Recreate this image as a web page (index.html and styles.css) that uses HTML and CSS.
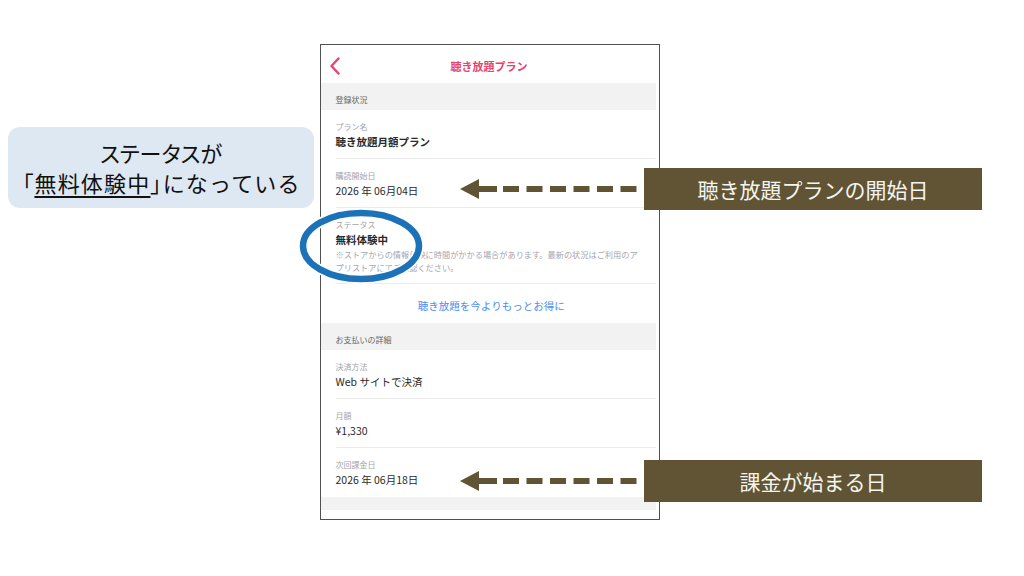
FILE: index.html
```html
<!DOCTYPE html>
<html lang="ja">
<head>
<meta charset="utf-8">
<title>聴き放題プラン</title>
<link rel="stylesheet" href="styles.css">
</head>
<body>
<div class="slide">
  <div class="phone">
    <div class="screen">
      <header class="nav">
        <svg class="back" width="12" height="18" viewBox="0 0 12 18"><polyline points="9.5,1.5 2.5,9 9.5,16.5" fill="none" stroke="#e6446e" stroke-width="2.4" stroke-linecap="round" stroke-linejoin="round"/></svg>
        <h1 class="title">聴き放題プラン</h1>
        <span></span>
      </header>
      <div class="band">登録状況</div>
      <div class="row">
        <div class="label">プラン名</div>
        <div class="value strong">聴き放題月額プラン</div>
      </div>
      <div class="row">
        <div class="label">購読開始日</div>
        <div class="value">2026 年 06月04日</div>
      </div>
      <div class="row last status">
        <div class="label">ステータス</div>
        <div class="value strong">無料体験中</div>
        <p class="note">※ストアからの情報反映に時間がかかる場合があります。最新の状況はご利用のアプリストアにてご確認ください。</p>
      </div>
      <div class="link-row"><span class="link">聴き放題を今よりもっとお得に</span></div>
      <div class="band">お支払いの詳細</div>
      <div class="row">
        <div class="label">決済方法</div>
        <div class="value">Web サイトで決済</div>
      </div>
      <div class="row">
        <div class="label">月額</div>
        <div class="value">¥1,330</div>
      </div>
      <div class="row last">
        <div class="label">次回課金日</div>
        <div class="value">2026 年 06月18日</div>
      </div>
      <div class="band short"></div>
    </div>
  </div>

  <div class="callout">
    <div class="line1">ステータスが</div>
    <div class="line2"><span class="br">「</span><span class="ul">無料体験中</span><span class="br">」</span>になっている</div>
  </div>

  <svg class="ring" width="140" height="90" viewBox="0 0 140 90">
    <ellipse cx="70" cy="44" rx="58" ry="33" fill="none" stroke="#ffffff" stroke-width="10"/>
    <ellipse cx="70" cy="44" rx="58" ry="33" fill="none" stroke="#1c72b8" stroke-width="6.5"/>
  </svg>

  <div class="pointer p1">
    <svg class="arrow" width="184" height="22" viewBox="0 0 184 22">
      <polygon points="0,11 19,1 19,21" fill="#605434"/>
      <rect x="18" y="8" width="19" height="6" fill="#605434"/>
      <line x1="43" y1="11" x2="184" y2="11" stroke="#605434" stroke-width="6" stroke-dasharray="16 7.5"/>
    </svg>
    <div class="tag">聴き放題プランの開始日</div>
  </div>

  <div class="pointer p2">
    <svg class="arrow" width="184" height="22" viewBox="0 0 184 22">
      <polygon points="0,11 19,1 19,21" fill="#605434"/>
      <rect x="18" y="8" width="19" height="6" fill="#605434"/>
      <line x1="43" y1="11" x2="184" y2="11" stroke="#605434" stroke-width="6" stroke-dasharray="16 7.5"/>
    </svg>
    <div class="tag">課金が始まる日</div>
  </div>
</div>
</body>
</html>
```

FILE: styles.css
```css
* { box-sizing: border-box; }
html, body { margin: 0; padding: 0; background: #ffffff; }
body {
  font-family: "Noto Sans CJK JP", "Noto Sans", sans-serif;
  width: 1024px;
  height: 576px;
  overflow: hidden;
}
.slide {
  position: relative;
  width: 1024px;
  height: 576px;
  padding: 44px 0 0 320px;
}
.phone {
  width: 340px;
  border: 1.5px solid #505050;
  background: #ffffff;
}
.screen {
  padding: 0 3.5px 9px 0;
}
.nav {
  height: 38px;
  display: grid;
  grid-template-columns: 40px 1fr 40px;
  align-items: center;
  padding: 4px 0 0 7.5px;
}
.back { display: block; }
.title {
  margin: 0 -40px;
  text-align: center;
  font-size: 11px;
  font-weight: 700;
  color: #e6446e;
  line-height: 16px;
  grid-column: 2;
  padding-right: 6px;
}
.nav span { grid-column: 3; }
.band {
  background: #f2f2f2;
  height: 27px;
  padding: 11px 0 0 14.5px;
  font-size: 8px;
  line-height: 12px;
  color: #666666;
}
.band.short { height: 13px; padding: 0; }
.row {
  margin-left: 14.5px;
  padding: 11px 0 8px 0;
  border-bottom: 1px solid #ececec;
  height: 49px;
}
.row.last { border-bottom: none; }
.row.status { height: 75.5px; border-bottom: 1px solid #ececec; }
.label {
  font-size: 8px;
  line-height: 12px;
  color: #a3a3ab;
}
.value {
  font-size: 10.5px;
  line-height: 18px;
  color: #2a2a2a;
}
.value.strong { font-weight: 700; }
.note {
  margin: -1px 0 0 0;
  width: 309px;
  font-size: 8.2px;
  line-height: 13px;
  color: #a6a6ae;
}
.link-row {
  height: 39px;
  line-height: 39px;
  text-align: center;
  padding-left: 6px;
}
.link {
  font-size: 10.5px;
  color: #4a8ef0;
}
.callout {
  position: absolute;
  left: 8px;
  top: 127px;
  width: 306px;
  height: 81px;
  border-radius: 12px;
  background: #dee8f3;
  display: flex;
  flex-direction: column;
  align-items: center;
  justify-content: center;
  font-size: 22px;
  line-height: 30px;
  color: #111111;
  padding-bottom: 2px;
}
.line1 { font-feature-settings: "palt"; }
.line2 { letter-spacing: 1.2px; padding-left: 1px; }
.br { font-feature-settings: "palt"; }
.ul {
  text-decoration: underline;
  text-decoration-thickness: 1.5px;
  text-underline-offset: 4px;
}
.ring {
  position: absolute;
  left: 291px;
  top: 202px;
}
.pointer {
  position: absolute;
  left: 460px;
  display: flex;
  align-items: center;
}
.pointer.p1 { top: 168px; }
.pointer.p2 { top: 460px; }
.arrow { display: block; }
.tag {
  width: 338px;
  height: 42px;
  background: #605434;
  color: #f4f4f0;
  font-size: 21px;
  line-height: 42px;
  text-align: center;
}
```
